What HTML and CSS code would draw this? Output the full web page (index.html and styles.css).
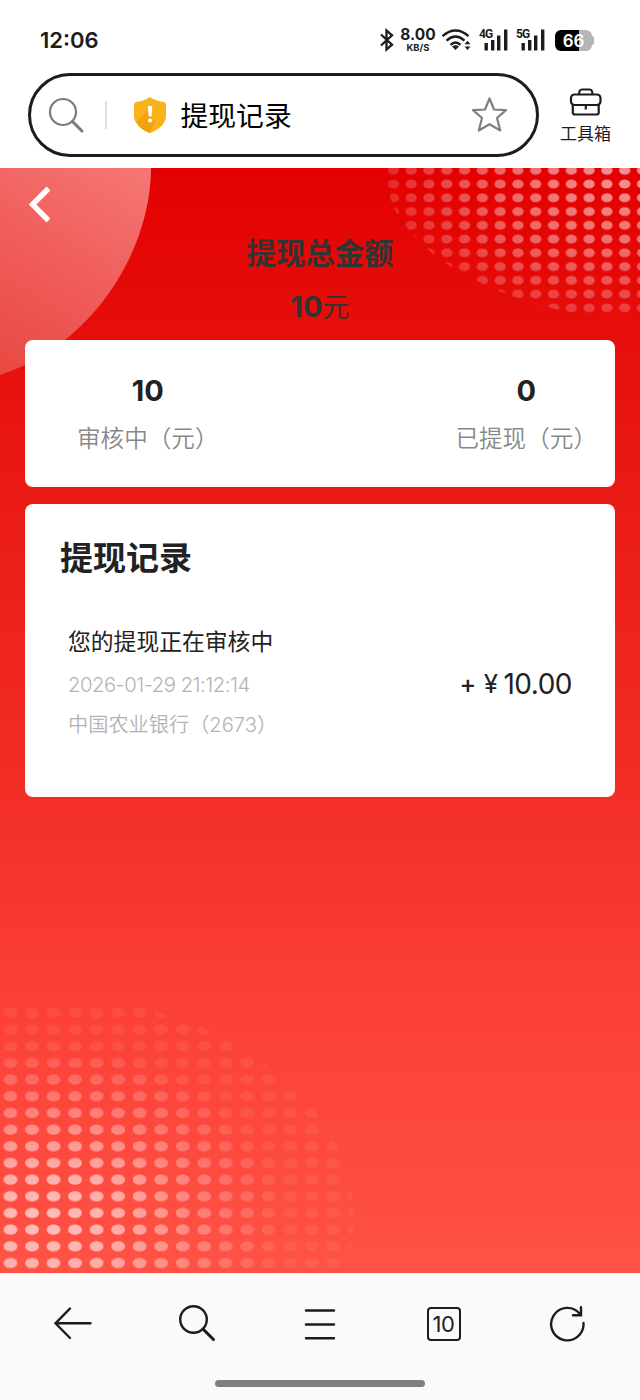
FILE: index.html
```html
<!DOCTYPE html>
<html lang="zh-CN">
<head>
<meta charset="utf-8">
<title>提现记录</title>
<link rel="stylesheet" href="styles.css">
</head>
<body>
<header class="status">
  <span class="clock">12:06</span>
  <div class="indicators">
    <svg class="bt" width="16" height="24" viewBox="0 0 16 24" fill="none" stroke="#1c1c1c" stroke-width="2.3"><path d="M2 6.5 13 16.7 7.5 21.500V2.500L13 7.300 2 17.500"/></svg>
    <span class="speed"><b>8.00</b><small>KB/S</small></span>
    <svg class="wifi" width="32" height="24" viewBox="0 0 32 24" fill="none" stroke="#1c1c1c" stroke-width="2.400"><path d="M1.500 8.200Q14.500-3 27.500 8.200M5.500 12.700Q14.500 4.500 23.500 12.700M9.500 16.800Q14.500 12 19.500 16.800"/><path d="M11 18.500q3.500-2.500 7 0l-3.500 3.500zM23.500 16.300l3-3.500 3 3.500zM23.500 18.500h6l-3 3.500z" fill="#1c1c1c" stroke="none"/></svg>
    <span class="signal"><i>4G</i><svg width="30" height="24" viewBox="0 0 30 24" fill="#1c1c1c"><path d="M5.500 15h3.400v7.500H5.500zM12 12h3.400v10.500H12zM18 7.500h3.400v15H18zM25 1.500h3.400v21H25z"/></svg></span>
    <span class="signal"><i>5G</i><svg width="30" height="24" viewBox="0 0 30 24" fill="#1c1c1c"><path d="M5.500 15h3.400v7.500H5.500zM12 12h3.400v10.500H12zM18 7.500h3.400v15H18zM25 1.500h3.400v21H25z"/></svg></span>
    <span class="battery"><b>66</b></span>
  </div>
</header>

<div class="toolbar">
  <div class="address">
    <svg class="find" width="38" height="38" viewBox="0 0 38 38" fill="none" stroke="#7b7b7b" stroke-linecap="round"><circle cx="15" cy="16" r="13" stroke-width="2.200"/><path d="M24.500 25.500 34 35" stroke-width="3"/></svg>
    <span class="divider"></span>
    <svg class="shield" width="32" height="36" viewBox="0 0 32 36"><path d="M16 0C12 3 6 4.500 2 5Q0 5.500 0 8V19C0 27 8 33 16 36 24 33 32 27 32 19V8Q32 5.500 30 5C26 4.500 20 3 16 0Z" fill="#f8b31a"/><path d="M2.500 25Q8 19 13 14L21 25 16 36C10 34 5 30 2.500 25Z" fill="#f0a30d"/><path d="M13.900 9h4.400l-.8 10.500h-2.800z" fill="#fff"/><circle cx="16.100" cy="23.500" r="2.100" fill="#fff"/></svg>
    <span class="site">提现记录</span>
    <svg class="star" width="38" height="38" viewBox="0 0 38 38" fill="none" stroke="#808080" stroke-width="2.200" stroke-linejoin="round"><path d="M18.500 2.500 23 13.500 35 14.200 26 22 29.300 34.500 18.500 28.300 7.800 34.500 11 22 2 14.200 14 13.500Z"/></svg>
  </div>
  <div class="toolbox">
    <svg width="34" height="30" viewBox="0 0 34 30" fill="none" stroke="#1c1c1c" stroke-width="2.200"><rect x="2" y="7.500" width="29.500" height="10.500" rx="3.500"/><path d="M3.800 18V25.500Q3.800 27.500 6 27.500H27.500Q29.700 27.500 29.700 25.500V18M10 7.500Q10 2.500 13 2.500H20.500Q23.500 2.500 23.500 7.500M16.800 18v4.500"/></svg>
    <span>工具箱</span>
  </div>
</div>

<main class="page">
  <svg class="backdrop" width="640" height="1105" viewBox="0 168 640 1105">
    <defs>
      <linearGradient id="arc" gradientUnits="userSpaceOnUse" x1="10" y1="370" x2="130" y2="170"><stop offset="0" stop-color="#e94a43"/><stop offset=".5" stop-color="#f05d5a"/><stop offset="1" stop-color="#f47573"/></linearGradient>
      <pattern id="dotsTop" patternUnits="userSpaceOnUse" x="384.400" y="163.400" width="17.800" height="13.760"><ellipse cx="8.900" cy="6.880" rx="5.700" ry="4.500" fill="#fff"/></pattern>
      <pattern id="dotsLow" patternUnits="userSpaceOnUse" x="-.3" y="1004.400" width="21.530" height="16.680"><ellipse cx="10.765" cy="8.340" rx="6.900" ry="5.200" fill="#fff"/></pattern>
      <radialGradient id="glowTop" gradientUnits="userSpaceOnUse" cx="0" cy="0" r="1" gradientTransform="translate(622 178) scale(240 150)"><stop offset="0" stop-color="#fff" stop-opacity=".58"/><stop offset=".5" stop-color="#fff" stop-opacity=".4"/><stop offset="1" stop-color="#fff" stop-opacity=".15"/></radialGradient>
      <radialGradient id="glowLow" gradientUnits="userSpaceOnUse" cx="0" cy="0" r="1" gradientTransform="translate(45 1220) scale(240 180)"><stop offset="0" stop-color="#fff" stop-opacity=".65"/><stop offset=".3" stop-color="#fff" stop-opacity=".54"/><stop offset=".65" stop-color="#fff" stop-opacity=".29"/><stop offset="1" stop-color="#fff" stop-opacity=".07"/></radialGradient>
      <mask id="fadeTop"><rect x="380" y="160" width="260" height="160" fill="url(#glowTop)"/></mask>
      <mask id="fadeLow"><rect x="0" y="1000" width="370" height="273" fill="url(#glowLow)"/></mask>
    </defs>
    <path d="M0 168H151C151 245 98 343 0 375Z" fill="url(#arc)"/>
    <g mask="url(#fadeTop)"><path d="M387 168Q387 190 393 206 414 246 460 272 515 303 580 314H640V168Z" fill="url(#dotsTop)"/></g>
    <g mask="url(#fadeLow)"><path d="M0 1004H120Q180 1014 233 1043 285 1075 318 1114 353 1165 353 1215V1240L340 1273H0Z" fill="url(#dotsLow)"/></g>
  </svg>
  <svg class="back" width="24" height="38" viewBox="0 0 24 38" fill="none" stroke="#fff" stroke-width="5.400"><path d="M20.500 2.500 4.500 18.500 20.500 34.500"/></svg>
  <section class="total">
    <h1>提现总金额</h1>
    <p><b>10</b>元</p>
  </section>
  <section class="card summary">
    <div class="stat"><b>10</b><span>审核中（元）</span></div>
    <div class="stat"><b>0</b><span>已提现（元）</span></div>
  </section>
  <section class="card records">
    <h2>提现记录</h2>
    <div class="record">
      <div class="details">
        <p class="state">您的提现正在审核中</p>
        <p class="time">2026-01-29 21:12:14</p>
        <p class="bank">中国农业银行（<span>2673</span>）</p>
      </div>
      <div class="amount"><span class="plus">+</span><span class="yen">¥</span><span>10.00</span></div>
    </div>
  </section>
</main>

<footer class="bottom">
  <nav class="nav">
    <svg width="40" height="40" viewBox="0 0 40 40"><path d="M17 5.500 2.500 20.300 17 35M2.500 20.300H37.500"/></svg>
    <svg width="40" height="40" viewBox="0 0 40 40"><circle cx="16.500" cy="16.500" r="13.300"/><path d="M26 26 36.500 36.500" stroke-width="3"/></svg>
    <svg width="40" height="40" viewBox="0 0 40 40"><path d="M6 7.500H34M6 21.500H34M6 35.300H34"/></svg>
    <span class="tabs">10</span>
    <svg width="40" height="40" viewBox="0 0 40 40"><path d="M36.500 20A16.200 16.200 0 1 1 33 11M34 4.300V12.300H26"/></svg>
  </nav>
  <div class="handle"></div>
</footer>
</body>
</html>
```
FILE: styles.css
```css
* { box-sizing: border-box; }
body {
  margin: 0;
  width: 640px;
  height: 1400px;
  overflow: hidden;
  background: #fff;
  color: #222;
  font-family: Inter, "Noto Sans CJK SC", sans-serif;
}
h1, h2, p { margin: 0; }
svg { display: block; flex: none; }

.status {
  height: 73px;
  padding: 28px 48px 0 40px;
  display: flex;
  justify-content: space-between;
  align-items: flex-start;
}
.clock { font-size: 22px; line-height: 25px; font-weight: 600; color: #1c1c1c; }
.indicators { display: flex; height: 24px; align-items: flex-start; color: #1c1c1c; }
.speed { width: 36px; margin: 0 5px; display: flex; flex-direction: column; align-items: center; }
.speed b { font-size: 15.5px; line-height: 14px; font-weight: 700; }
.speed small { margin-top: 1px; font-size: 9.5px; line-height: 9px; font-weight: 700; }
.signal { position: relative; margin-left: 6px; width: 31px; }
.signal i { position: absolute; left: 0; top: 0; font: 700 12px/13px "Roboto", sans-serif; letter-spacing: -.8px; }
.battery {
  position: relative;
  width: 37px;
  height: 21px;
  margin: 2px 0 0 8px;
  border-radius: 6px;
  background: linear-gradient(90deg, #000 66%, #b5b5b5 66%);
  color: #fff;
  text-align: center;
}
.battery::after {
  content: "";
  position: absolute;
  right: -2px;
  top: 6px;
  width: 2px;
  height: 9px;
  border-radius: 0 2px 2px 0;
  background: #b5b5b5;
}
.battery b { display: block; font-size: 17px; line-height: 22px; font-weight: 600; }

.toolbar { height: 95px; padding-left: 28px; display: flex; }
.address {
  width: 511px;
  height: 84px;
  border: 3px solid #1c1c1c;
  border-radius: 43px;
  display: flex;
  align-items: center;
  padding: 0 27px 0 17px;
}
.divider { width: 1.5px; height: 28px; margin: 0 27px 0 19px; background: #dedede; }
.site { margin-left: 15px; padding-top: 2px; font-size: 27.8px; line-height: 40px; color: #000; }
.star { margin-left: auto; }
.toolbox {
  width: 93px;
  padding-top: 14px;
  display: flex;
  flex-direction: column;
  align-items: center;
  color: #1c1c1c;
}
.toolbox span { font-size: 17px; line-height: 34px; font-weight: 400; }

.page {
  position: relative;
  height: 1105px;
  background: linear-gradient(#e20100, #e60f0c 16%, #ea1a14 29%, #f22e27 57%, #fb4037 76%, #ff5245);
}
.backdrop { position: absolute; left: 0; top: 0; }
.back { position: absolute; left: 28px; top: 18px; }
.total { position: relative; height: 172px; padding-top: 64px; text-align: center; color: #333; }
.total h1 { font-size: 29.4px; line-height: 44px; font-weight: 700; }
.total p { margin-top: 9px; font-size: 27px; line-height: 44px; font-weight: 350; }
.total b { font-size: 29px; font-weight: 700; }
.card { position: relative; width: 590px; margin-left: 25px; border-radius: 8px; background: #fff; }
.summary {
  height: 147px;
  padding: 32px 18px 0 52px;
  display: flex;
  justify-content: space-between;
}
.stat { display: flex; flex-direction: column; align-items: center; }
.stat b { font-size: 29px; line-height: 38px; font-weight: 700; }
.stat span { margin-top: 11px; font-size: 23.600px; line-height: 36px; font-weight: 350; color: #888; }
.records { height: 293px; margin-top: 17px; padding: 32px 43px 0 35px; }
.records h2 { font-size: 33px; line-height: 44px; font-weight: 700; }
.record { margin: 44px 0 0 8px; display: flex; justify-content: space-between; align-items: center; }
.state { font-size: 22.800px; line-height: 36px; }
.time { margin-top: 7px; font-size: 20.300px; line-height: 36px; font-weight: 350; letter-spacing: -.5px; color: #b3b3b3; }
.bank { margin-top: 4px; font-size: 20.200px; line-height: 36px; font-weight: 350; color: #b3b3b3; }
.amount { display: flex; align-items: center; font-size: 28px; line-height: 36px; letter-spacing: -.5px; }
.plus { font-size: 25px; font-weight: 500; }
.yen { margin: 0 6px 0 8px; font-size: 26px; }

.bottom { height: 127px; background: #fafafa; }
.nav { height: 105px; padding: 30px 53px 0; display: flex; justify-content: space-between; }
.nav svg { fill: none; stroke: #1c1c1c; stroke-width: 2.4; stroke-linecap: round; }
.tabs {
  width: 34px;
  height: 34px;
  margin: 4px 3px 0;
  border: 2px solid #1c1c1c;
  border-radius: 4px;
  font-size: 22px;
  line-height: 31px;
  letter-spacing: -.5px;
  text-align: center;
}
.handle { width: 210px; height: 7px; margin: 2px auto 0; border-radius: 4px; background: #7f7f7f; }
```
